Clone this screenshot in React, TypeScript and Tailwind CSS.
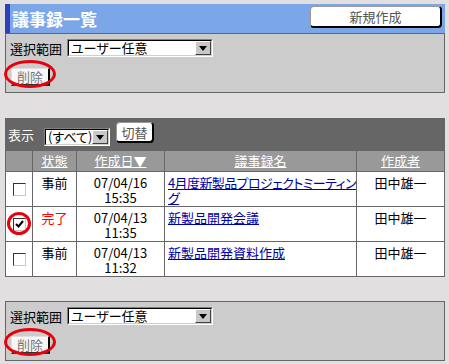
import React from "react";

const font = 'font-["Noto_Sans_CJK_JP","Noto_Sans",sans-serif]';

const rows = [
  { status: "事前", done: false, date: "07/04/16", time: "15:35", name: ["4月度新製品プロジェクトミーティン", "グ"], checked: false },
  { status: "完了", done: true, date: "07/04/13", time: "11:35", name: ["新製品開発会議"], checked: true },
  { status: "事前", done: false, date: "07/04/13", time: "11:32", name: ["新製品開発資料作成"], checked: false },
];

function Select({ value, width }: { value: string; width: string }) {
  return (
    <div className={`${width} h-[18px] border-t border-l border-[#808080] border-b border-r border-b-white border-r-white`}>
      <div className="h-full flex items-center bg-white border-t border-l border-black border-b border-r border-b-[#d4d0c8] border-r-[#d4d0c8]">
        <span className="flex-1 min-w-0 pl-[2px] text-[13px] leading-[16px] text-black whitespace-nowrap [font-feature-settings:'palt']">
          {value}
        </span>
        <div className="w-[16px] h-[14px] shrink-0 bg-[#c8c8c8] border-t border-l border-white border-r border-b border-r-[#404040] border-b-[#404040] flex items-center justify-center">
          <svg width="8" height="5" viewBox="0 0 8 5">
            <path d="M0 0H8L4 5Z" fill="#000" />
          </svg>
        </div>
      </div>
    </div>
  );
}

function DeleteButton() {
  return (
    <div className="relative w-[39px] h-[18px]">
      <div className="w-full h-full bg-[#f7f7f7] border-t border-l border-[#e0e0e0] border-r-2 border-b-2 border-r-black border-b-[#333] flex items-center justify-center text-[13px] leading-none text-[#777]">
        削除
      </div>
      <div className="absolute left-[-7px] top-[-8px] w-[52px] h-[28px] rounded-[50%] border-[3px] border-[#e8000c]" />
    </div>
  );
}

function RangePanel({ border }: { border: string }) {
  return (
    <div className={`bg-[#cccccc] ${border} border-[#666] h-[60px] pt-[5px] pl-[4px]`}>
      <div className="flex items-center">
        <span className="text-[13px] leading-none text-black mr-[5px]">選択範囲</span>
        <Select value="ユーザー任意" width="w-[146px]" />
      </div>
      <div className="mt-[11px] ml-[1px]">
        <DeleteButton />
      </div>
    </div>
  );
}

function Checkbox({ checked }: { checked: boolean }) {
  return (
    <div className="w-[13px] h-[13px] bg-white border-t border-l border-[#333] border-r border-b border-r-[#c8c8c8] border-b-[#c8c8c8] flex items-center justify-center">
      {checked && (
        <svg width="9" height="8" viewBox="0 0 9 8">
          <path d="M1 4L3.5 6.5L8 1" stroke="#000" strokeWidth="2" fill="none" />
        </svg>
      )}
    </div>
  );
}

export default function App() {
  return (
    <div className={`w-[449px] h-[364px] bg-[#e1dfdf] pt-[4px] pl-[5px] ${font}`}>
      <div className="w-[440px]">
        {/* Title bar */}
        <div className="h-[29px] bg-[#7ba6e8] border-l-[5px] border-[#2f3fb8] flex items-start justify-between">
          <h1 className="text-[17px] font-bold text-white leading-none pl-[2px] mt-[6px]">議事録一覧</h1>
          <button className="w-[132px] h-[22px] mt-[2px] mr-[3px] bg-white rounded-[4px] border border-[#999] border-r-2 border-b-2 border-r-black border-b-black text-[13px] leading-none text-[#555]">
            新規作成
          </button>
        </div>
        <RangePanel border="border-t border-l border-r border-b" />

        {/* List */}
        <div className="mt-[25px]">
          <div className="h-[33px] bg-[#666] flex items-start pl-[3px]">
            <span className="text-[13px] leading-none text-white mt-[10px]">表示</span>
            <div className="ml-[10px] mt-[10px]">
              <Select value="(すべて)" width="w-[66px]" />
            </div>
            <button className="ml-[6px] mt-[4px] w-[38px] h-[21px] bg-white rounded-[4px] border border-[#999] border-r-2 border-b-2 border-r-black border-b-black text-[13px] leading-none text-[#555]">
              切替
            </button>
          </div>
          <div className="border-l border-r border-[#666] bg-white text-[13px]">
            <div className="flex h-[21px] bg-[#999] border-b border-[#666] text-white leading-[20px]">
              <div className="w-[27px] border-r border-[#666]" />
              <div className="w-[44px] border-r border-[#666] text-center underline">状態</div>
              <div className="w-[88px] border-r border-[#666] text-center underline">作成日▼</div>
              <div className="w-[192px] border-r border-[#666] text-center underline">議事録名</div>
              <div className="flex-1 text-center underline">作成者</div>
            </div>
            {rows.map((r, i) => (
              <div key={i} className="flex h-[35px] border-b border-[#666] leading-[15px] text-black">
                <div className="w-[27px] border-r border-[#666] flex items-center justify-center relative">
                  <Checkbox checked={r.checked} />
                  {r.checked && (
                    <div className="absolute left-[1px] top-[5px] w-[24px] h-[23px] rounded-[50%] border-[3px] border-[#e8000c]" />
                  )}
                </div>
                <div className={`w-[44px] border-r border-[#666] text-center pt-[3px] ${r.done ? "text-[#ff0000]" : ""}`}>
                  {r.status}
                </div>
                <div className="w-[88px] border-r border-[#666] text-center pt-[3px]">
                  <div>{r.date}</div>
                  <div>{r.time}</div>
                </div>
                <div className="w-[192px] border-r border-[#666] pt-[3px] pl-[3px] overflow-hidden">
                  <a
                    href="#"
                    className={`text-[#0000a8] underline whitespace-nowrap [font-feature-settings:'palt'] ${r.name.length > 1 ? "tracking-[-0.6px]" : ""}`}
                  >
                    {r.name[0]}
                    {r.name.length > 1 && (
                      <>
                        <br />
                        {r.name[1]}
                      </>
                    )}
                  </a>
                </div>
                <div className="flex-1 text-center pt-[3px]">田中雄一</div>
              </div>
            ))}
          </div>
        </div>

        <div className="mt-[24px]">
          <RangePanel border="border" />
        </div>
      </div>
    </div>
  );
}
